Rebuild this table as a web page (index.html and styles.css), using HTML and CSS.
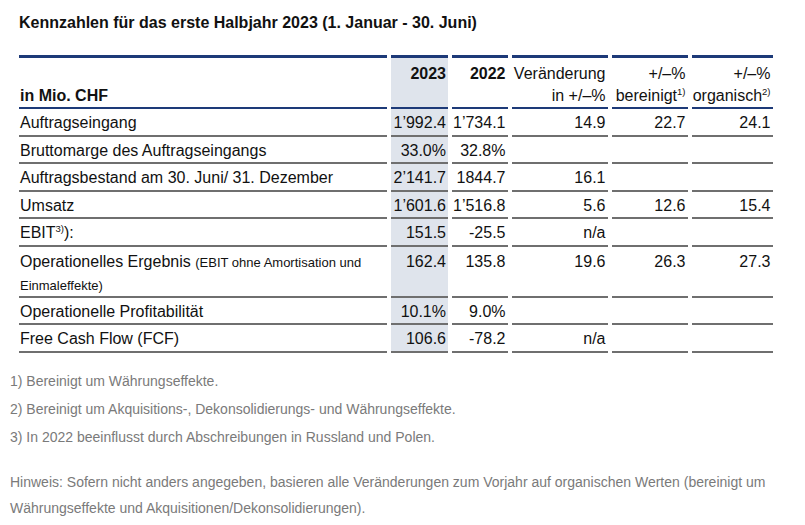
FILE: index.html
```html
<!DOCTYPE html>
<html lang="de">
<head>
<meta charset="utf-8">
<title>Kennzahlen</title>
<link rel="stylesheet" href="styles.css">
</head>
<body>
<h1 class="title">Kennzahlen für das erste Halbjahr 2023 (1. Januar - 30. Juni)</h1>
<table class="kpi">
  <colgroup>
    <col class="c1"><col class="c2"><col class="c3"><col class="c4"><col class="c5"><col class="c6">
  </colgroup>
  <thead>
    <tr>
      <th class="label">in Mio. CHF</th>
      <th class="hl num">2023</th>
      <th class="num">2022</th>
      <th class="num normal">Veränderung<br>in +/–%</th>
      <th class="num normal">+/–%<br>bereinigt<sup>1)</sup></th>
      <th class="num normal">+/–%<br>organisch<sup>2)</sup></th>
    </tr>
  </thead>
  <tbody>
    <tr><td>Auftragseingang</td><td class="hl num">1’992.4</td><td class="num">1’734.1</td><td class="num">14.9</td><td class="num">22.7</td><td class="num">24.1</td></tr>
    <tr><td>Bruttomarge des Auftragseingangs</td><td class="hl num">33.0%</td><td class="num">32.8%</td><td></td><td></td><td></td></tr>
    <tr><td>Auftragsbestand am 30. Juni/ 31. Dezember</td><td class="hl num">2’141.7</td><td class="num">1844.7</td><td class="num">16.1</td><td></td><td></td></tr>
    <tr><td>Umsatz</td><td class="hl num">1’601.6</td><td class="num">1’516.8</td><td class="num">5.6</td><td class="num">12.6</td><td class="num">15.4</td></tr>
    <tr><td>EBIT<sup>3)</sup>):</td><td class="hl num">151.5</td><td class="num">-25.5</td><td class="num">n/a</td><td></td><td></td></tr>
    <tr class="tall"><td>Operationelles Ergebnis <span class="small">(EBIT ohne Amortisation und Einmaleffekte)</span></td><td class="hl num">162.4</td><td class="num">135.8</td><td class="num">19.6</td><td class="num">26.3</td><td class="num">27.3</td></tr>
    <tr><td>Operationelle Profitabilität</td><td class="hl num">10.1%</td><td class="num">9.0%</td><td></td><td></td><td></td></tr>
    <tr><td>Free Cash Flow (FCF)</td><td class="hl num">106.6</td><td class="num">-78.2</td><td class="num">n/a</td><td></td><td></td></tr>
  </tbody>
</table>
<div class="notes">
  <p class="note">1) Bereinigt um Währungseffekte.</p>
  <p class="note">2) Bereinigt um Akquisitions-, Dekonsolidierungs- und Währungseffekte.</p>
  <p class="note">3) In 2022 beeinflusst durch Abschreibungen in Russland und Polen.</p>
  <p class="hint">Hinweis: Sofern nicht anders angegeben, basieren alle Veränderungen zum Vorjahr auf organischen Werten (bereinigt um Währungseffekte und Akquisitionen/Dekonsolidierungen).</p>
</div>
</body>
</html>
```
FILE: styles.css
```css
html, body {
  background: #ffffff;
}
body {
  margin: 0;
  padding: 0 10px;
  font-family: "Liberation Sans", Arial, sans-serif;
  color: #111111;
}
.title {
  margin: 13px 0 0 9px;
  font-size: 16px;
  line-height: 20px;
  font-weight: bold;
  color: #111;
}
.kpi {
  margin: 22px 0 0 5px;
  border-collapse: separate;
  border-spacing: 4px 0;
  table-layout: fixed;
  font-size: 16px;
}
.c1 { width: 368px; }
.c2 { width: 57px; }
.c3 { width: 55px; }
.c4 { width: 96px; }
.c5 { width: 76px; }
.c6 { width: 81px; }
.kpi th {
  border-top: 3px solid #1d3a78;
  border-bottom: 2px solid #1d3a78;
  height: 44px;
  padding: 5px 2px 0 0;
  line-height: 22px;
  vertical-align: top;
  font-weight: bold;
  white-space: nowrap;
}
.kpi th.normal {
  font-weight: normal;
}
.kpi th.label {
  text-align: left;
  vertical-align: bottom;
  padding: 0 0 0 1px;
}
.kpi td {
  border-bottom: 2px solid #6f6f6f;
  padding: 3px 2px 0 1px;
  height: 22.5px;
  line-height: 21px;
  vertical-align: top;
  text-align: left;
  white-space: nowrap;
}
.kpi .num {
  text-align: right;
}
.kpi .hl {
  background: #dfe4ec;
}
.kpi sup {
  font-size: 9.5px;
  line-height: 0;
  vertical-align: 6px;
}
.kpi .tall td {
  line-height: 23px;
  white-space: normal;
  height: 46px;
}
.kpi .small {
  font-size: 13px;
  line-height: 1;
}
.notes {
  margin-top: 14px;
  color: #7a7a7a;
  font-size: 14px;
}
.note {
  margin: 0;
  line-height: 28px;
}
.hint {
  margin: 18px 0 0 0;
  line-height: 26px;
  max-width: 765px;
}
```
